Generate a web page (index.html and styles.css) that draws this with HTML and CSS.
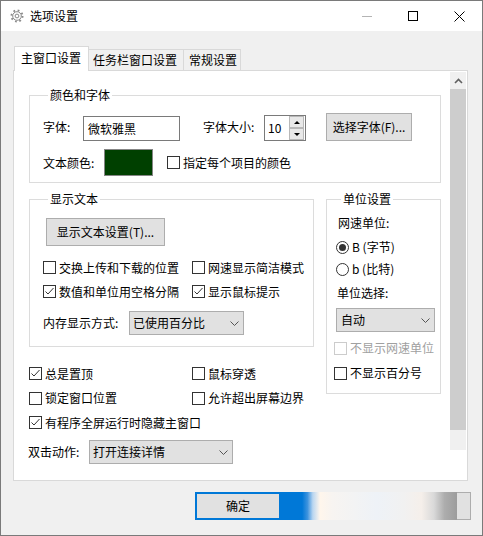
FILE: index.html
```html
<!DOCTYPE html>
<html lang="zh-CN">
<head>
<meta charset="utf-8">
<title>选项设置</title>
<link rel="stylesheet" href="styles.css">
</head>
<body>
<div class="window">
  <div class="titlebar">
    <svg class="gear" viewBox="0 0 14 14" width="14" height="14">
      <circle cx="7" cy="7" r="5.6" fill="none" stroke="#8a8a8a" stroke-width="1.8" stroke-dasharray="1.8 2.6"/>
      <circle cx="7" cy="7" r="4.3" fill="none" stroke="#8a8a8a" stroke-width="1"/>
      <circle cx="7" cy="7" r="1.9" fill="none" stroke="#8a8a8a" stroke-width="1"/>
    </svg>
    <span class="title">选项设置</span>
    <div class="caption">
      <span class="cap"><svg width="10" height="10" viewBox="0 0 10 10"><line x1="0" y1="5.5" x2="10" y2="5.5" stroke="#b4b4b4" stroke-width="1"/></svg></span>
      <span class="cap"><svg width="10" height="10" viewBox="0 0 10 10"><rect x="0.5" y="0.5" width="9" height="9" fill="none" stroke="#000" stroke-width="1"/></svg></span>
      <span class="cap"><svg width="11" height="11" viewBox="0 0 11 11"><path d="M0.5 0.5 L10.5 10.5 M10.5 0.5 L0.5 10.5" stroke="#000" stroke-width="1"/></svg></span>
    </div>
  </div>

  <div class="client">
    <div class="tabs">
      <div class="tab active">主窗口设置</div>
      <div class="tab t2">任务栏窗口设置</div>
      <div class="tab t3">常规设置</div>
    </div>

    <div class="panel">
      <div class="content">
        <fieldset class="group g-font">
          <legend>颜色和字体</legend>
          <div class="row r1">
            <span class="lbl w40">字体:</span>
            <div class="text-input">微软雅黑</div>
            <span class="lbl w61 ml23">字体大小:</span>
            <div class="spin">
              <span class="spin-val">10</span>
              <div class="spin-btns">
                <span class="sbtn"><i class="tri-up"></i></span>
                <span class="sbtn"><i class="tri-down"></i></span>
              </div>
            </div>
            <div class="btn btn-font">选择字体(F)...</div>
          </div>
          <div class="row r2">
            <span class="lbl w61">文本颜色:</span>
            <div class="swatch"></div>
            <label class="check ml14"><span class="cb"></span>指定每个项目的颜色</label>
          </div>
        </fieldset>

        <div class="cols">
          <div class="leftcol">
            <fieldset class="group g-text">
              <legend>显示文本</legend>
              <div class="btn btn-text">显示文本设置(T)...</div>
              <div class="cgrid g1">
                <label class="check"><span class="cb"></span>交换上传和下载的位置</label>
                <label class="check"><span class="cb"></span>网速显示简洁模式</label>
                <label class="check"><span class="cb on"><svg width="11" height="11" viewBox="0 0 11 11"><polyline points="1.5,5.5 4,8 9.5,2" fill="none" stroke="#333" stroke-width="1"/></svg></span>数值和单位用空格分隔</label>
                <label class="check"><span class="cb on"><svg width="11" height="11" viewBox="0 0 11 11"><polyline points="1.5,5.5 4,8 9.5,2" fill="none" stroke="#333" stroke-width="1"/></svg></span>显示鼠标提示</label>
              </div>
              <div class="row mem">
                <span class="lbl w86">内存显示方式:</span>
                <div class="combo c-mem"><span>已使用百分比</span><svg width="9" height="5" viewBox="0 0 9 5"><polyline points="0.5,0.5 4.5,4.5 8.5,0.5" fill="none" stroke="#555" stroke-width="1"/></svg></div>
              </div>
            </fieldset>

            <div class="cgrid g2">
              <label class="check"><span class="cb on"><svg width="11" height="11" viewBox="0 0 11 11"><polyline points="1.5,5.5 4,8 9.5,2" fill="none" stroke="#333" stroke-width="1"/></svg></span>总是置顶</label>
              <label class="check"><span class="cb"></span>鼠标穿透</label>
              <label class="check"><span class="cb"></span>锁定窗口位置</label>
              <label class="check"><span class="cb"></span>允许超出屏幕边界</label>
              <label class="check span2"><span class="cb on"><svg width="11" height="11" viewBox="0 0 11 11"><polyline points="1.5,5.5 4,8 9.5,2" fill="none" stroke="#333" stroke-width="1"/></svg></span>有程序全屏运行时隐藏主窗口</label>
            </div>

            <div class="row dbl">
              <span class="lbl w61 dbl-lbl">双击动作:</span>
              <div class="combo c-dbl"><span>打开连接详情</span><svg width="9" height="5" viewBox="0 0 9 5"><polyline points="0.5,0.5 4.5,4.5 8.5,0.5" fill="none" stroke="#555" stroke-width="1"/></svg></div>
            </div>
          </div>

          <fieldset class="group g-unit">
            <legend>单位设置</legend>
            <div class="u-item u-lbl1">网速单位:</div>
            <label class="u-item radio r-first"><span class="rb on"></span>B (字节)</label>
            <label class="u-item radio"><span class="rb"></span>b (比特)</label>
            <div class="u-item u-lbl2">单位选择:</div>
            <div class="combo c-unit"><span>自动</span><svg width="9" height="5" viewBox="0 0 9 5"><polyline points="0.5,0.5 4.5,4.5 8.5,0.5" fill="none" stroke="#555" stroke-width="1"/></svg></div>
            <label class="u-item check disabled u-cb1"><span class="cb"></span>不显示网速单位</label>
            <label class="u-item check u-cb2"><span class="cb"></span>不显示百分号</label>
          </fieldset>
        </div>
      </div>

      <div class="scrollbar">
        <div class="sb-up"><svg width="9" height="6" viewBox="0 0 9 6"><polyline points="1,5 4.5,1.5 8,5" fill="none" stroke="#606060" stroke-width="1.6"/></svg></div>
        <div class="sb-thumb"></div>
        <div class="sb-track"></div>
      </div>
    </div>

    <div class="buttons">
      <div class="btn-ok">确定</div>
      <div class="smear"></div>
      <div class="smear-end"></div>
    </div>
  </div>
</div>
</body>
</html>
```

FILE: styles.css
```css
* { box-sizing: border-box; }
html, body { margin: 0; padding: 0; }
body {
  font-family: "Noto Sans CJK SC", "Microsoft YaHei", sans-serif;
  font-size: 12px;
  line-height: 16px;
  color: #000;
  background: #fff;
}

.window {
  width: 483px;
  height: 536px;
  border: 1px solid #7a7a7a;
  background: #f0f0f0;
  display: flex;
  flex-direction: column;
}

/* title bar */
.titlebar {
  flex: none;
  height: 30px;
  background: #fff;
  display: flex;
  align-items: center;
  padding-left: 9px;
}
.gear { flex: none; }
.title { margin-left: 6px; }
.caption { margin-left: auto; display: flex; height: 30px; }
.cap {
  width: 46px;
  height: 30px;
  display: flex;
  align-items: center;
  justify-content: center;
}

/* client */
.client {
  flex: 1;
  display: flex;
  flex-direction: column;
  padding: 15px 0 0 12px;
}

.tabs {
  height: 24px;
  margin-left: 1px;
  display: flex;
  align-items: flex-end;
}
.tab {
  height: 21px;
  border: 1px solid #d9d9d9;
  border-left: none;
  border-bottom: none;
  background: #f0f0f0;
  padding-top: 2px;
  white-space: nowrap;
}
.tab.active {
  width: 75px;
  height: 25px;
  border-left: 1px solid #d9d9d9;
  background: #fff;
  padding: 3px 0 0 6px;
  margin-bottom: -1px;
  position: relative;
  z-index: 1;
}
.tab.t2 { width: 95px; padding-left: 4px; }
.tab.t3 { width: 57px; padding-left: 5px; }

.panel {
  width: 455px;
  height: 411px;
  border: 1px solid #d9d9d9;
  background: #fff;
  display: flex;
}
.content {
  flex: 1;
  padding: 16px 0 0 15px;
}

/* scrollbar */
.scrollbar {
  width: 16px;
  margin: 1px 1px 0 0;
  height: 378px;
  display: flex;
  flex-direction: column;
}
.sb-up {
  height: 17px;
  background: #f0f0f0;
  display: flex;
  align-items: center;
  justify-content: center;
}
.sb-thumb { height: 341px; background: #cdcdcd; }
.sb-track { flex: 1; background: #f0f0f0; }

/* groups */
.group {
  margin: 0;
  padding: 0;
  border: 1px solid #dcdcdc;
  min-width: 0;
}
.group legend {
  padding: 0 2px;
  margin-left: 5px;
  line-height: 16px;
}

.row { display: flex; align-items: center; }
.lbl { flex: none; white-space: nowrap; }
.w40 { width: 40px; }
.w61 { width: 61px; }
.w86 { width: 86px; }
.ml23 { margin-left: 23px; }
.ml14 { margin-left: 14px; }

.g-font { width: 412px; padding: 0 0 6px 13px; }
.r1 { margin-top: 10px; height: 28px; }
.r2 { margin-top: 8px; height: 27px; }

.text-input {
  flex: none;
  width: 97px;
  height: 25px;
  align-self: flex-end;
  border: 1px solid #7a7a7a;
  background: #fff;
  padding-left: 4px;
  line-height: 23px;
}
.spin {
  flex: none;
  width: 42px;
  height: 26px;
  align-self: flex-end;
  border: 1px solid #7a7a7a;
  background: #fff;
  display: flex;
}
.spin-val { flex: 1; padding-left: 3px; line-height: 24px; }
.spin-btns {
  width: 16px;
  display: flex;
  flex-direction: column;
  padding: 0 1px 0 0;
}
.sbtn {
  flex: 1;
  border: 1px solid #b8b8b8;
  background: #e8e8e8;
  display: flex;
  align-items: center;
  justify-content: center;
}
.tri-up, .tri-down {
  width: 0;
  height: 0;
  border-left: 3px solid transparent;
  border-right: 3px solid transparent;
}
.tri-up { border-bottom: 3px solid #000; }
.tri-down { border-top: 3px solid #000; }

.btn {
  flex: none;
  background: #e1e1e1;
  border: 1px solid #adadad;
  display: flex;
  align-items: center;
  justify-content: center;
  white-space: nowrap;
}
.btn-font { width: 86px; height: 28px; margin-left: 20px; }

.swatch {
  flex: none;
  width: 49px;
  height: 27px;
  background: #004000;
  border: 1px solid #858585;
}

/* checkbox / radio */
.check {
  display: flex;
  align-items: center;
  gap: 3px;
  white-space: nowrap;
  height: 17px;
}
.cb {
  flex: none;
  width: 13px;
  height: 13px;
  border: 1px solid #333;
  background: #fff;
  display: flex;
  align-items: center;
  justify-content: center;
}
.check.disabled { color: #a0a0a0; }
.check.disabled .cb { border-color: #cccccc; }

.radio { display: flex; align-items: center; gap: 3px; white-space: nowrap; }
.rb {
  flex: none;
  width: 13px;
  height: 13px;
  border: 1px solid #333;
  border-radius: 50%;
  background: #fff;
  display: flex;
  align-items: center;
  justify-content: center;
}
.rb.on::after {
  content: "";
  width: 7px;
  height: 7px;
  border-radius: 50%;
  background: #333;
}

/* combos */
.combo {
  flex: none;
  background: #e1e1e1;
  border: 1px solid #adadad;
  display: flex;
  align-items: center;
  justify-content: space-between;
  padding: 0 4px 0 3px;
  white-space: nowrap;
}
.c-mem { width: 115px; height: 24px; }
.c-dbl { width: 144px; height: 24px; }
.c-unit { width: 99px; height: 24px; margin-top: 4px; padding-left: 4px; }

/* columns */
.cols {
  display: flex;
  align-items: flex-start;
  gap: 12px;
  margin-top: 8px;
}
.leftcol { width: 285px; flex: none; }

.g-text { width: 285px; padding: 11px 0 11px 13px; }
.btn-text { width: 119px; height: 28px; margin-left: 3px; }
.cgrid { display: grid; }
.g1 { grid-template-columns: 149px auto; row-gap: 7px; margin-top: 13px; }
.mem { margin-top: 11px; height: 24px; }

.g2 { grid-template-columns: 163px auto; row-gap: 7.5px; margin-top: 18px; }
.span2 { grid-column: 1 / 3; }

.dbl { margin-top: 9px; height: 24px; }
.dbl-lbl { margin-left: -1px; }

.g-unit { width: 115px; flex: none; padding: 0 0 9px 9px; }
.u-item { height: 22px; line-height: 22px; }
.u-lbl1 { margin-top: 5px; margin-left: 2px; }
.r-first { margin-top: 2px; }
.u-lbl2 { margin-top: 2px; margin-left: 1px; }
.u-cb1 { margin-top: 5px; margin-left: -2px; }
.u-cb2 { margin-top: 3px; margin-left: -2px; }

/* bottom buttons */
.buttons {
  display: flex;
  margin: 11px 0 0 182px;
  height: 28px;
}
.btn-ok {
  width: 84px;
  height: 28px;
  border: 2px solid #0078d7;
  border-right: none;
  background: #e1e1e1;
  display: flex;
  align-items: center;
  justify-content: center;
}
.smear {
  width: 178px;
  height: 28px;
  background: linear-gradient(to right,
    #0078d7 0%, #0078d7 13%, #3d93de 16%, #b9d6f1 19%,
    #fff6ec 23%, #f7f4f1 30%, #eef2f7 55%, #f1f1f1 70%,
    #f5efea 80%, #d9d9d9 87%, #adadad 93%, #9c9c9c 100%);
}
.smear-end {
  width: 14px;
  height: 28px;
  background: #e1e1e1;
  border: 1px solid #adadad;
  border-left: none;
}
```
